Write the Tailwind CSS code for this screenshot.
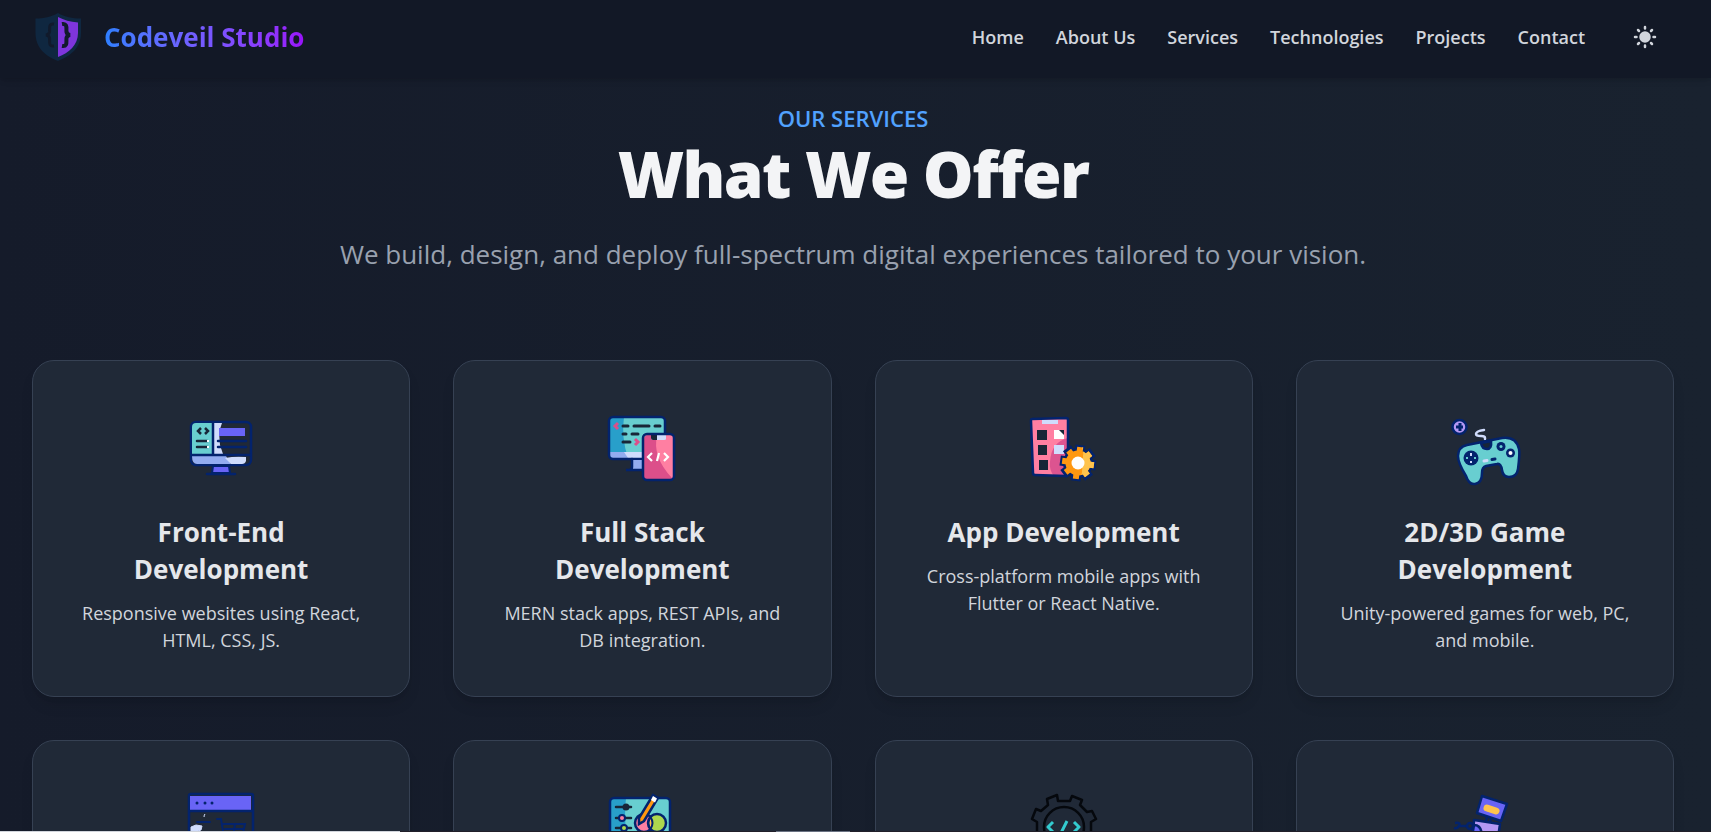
<!DOCTYPE html>
<html lang="en" class="dark">
<head>
    <meta charset="UTF-8">
    <meta name="viewport" content="width=device-width, initial-scale=1.0">
    <title>Codeveil Studio</title>
    <script src="https://cdn.jsdelivr.net/npm/@tailwindcss/browser@4"></script>
</head>
<body class="h-screen overflow-hidden bg-linear-to-r from-[#151b2a] to-[#19222f] font-['Open_Sans','Noto_Sans',sans-serif] text-gray-100">
    <header class="relative flex h-[78px] items-center justify-between bg-[#121826] pb-1 pl-8 pr-[38px] shadow-md">
        <a href="#" class="flex items-center gap-5">
            <svg class="h-[52px] w-[52px]" viewBox="0 0 52 52" aria-hidden="true">
                <path d="M26 2C19 6 12 7.500 3.500 7.500V22C3.500 37 14 45.500 26 50C38 45.500 49 37 49 22V7.500C40 7.500 33 6 26 2Z" fill="#0f2740"/>
                <path d="M26 6C32 9 38 11 46 11.500V22C46 34 37 42 26 46Z" fill="#7e35dc"/>
                <path d="M22 13C16 12 18 18 17.500 21C17 23.500 14 24 14 24C14 24 17 24.500 17.500 27C18 30 16 36 22 35" fill="none" stroke="#111a2b" stroke-width="3"/>
                <path d="M30 13C36 12 34 18 34.500 21C35 23.500 38 24 38 24C38 24 35 24.500 34.500 27C34 30 36 36 30 35" fill="none" stroke="#111a2b" stroke-width="4"/>
            </svg>
            <span class="bg-linear-to-r from-blue-500 to-purple-600 bg-clip-text text-[26px] leading-9 font-bold text-transparent">Codeveil Studio</span>
        </a>
        <div class="flex items-center gap-8">
            <nav class="flex items-center gap-8 text-lg font-semibold text-gray-300">
                <a href="#">Home</a>
                <a href="#">About Us</a>
                <a href="#">Services</a>
                <a href="#">Technologies</a>
                <a href="#">Projects</a>
                <a href="#">Contact</a>
            </nav>
            <button type="button" aria-label="Toggle theme" class="flex h-14 w-14 items-center justify-center p-4 text-gray-300">
                <svg class="h-6 w-6" viewBox="0 0 24 24" fill="currentColor" stroke="currentColor" stroke-width="2.500" stroke-linecap="round">
                    <circle cx="12" cy="12" r="4.500"/>
                    <path d="M12 2v1.500M12 20.500v1.500M2 12h1.500M20.500 12h1.500M5 5l1 1M18 18l1 1M5 19l1-1M18 6l1-1"/>
                </svg>
            </button>
        </div>
    </header>

    <main class="pl-8 pr-[37px] pt-6">
        <div class="text-center">
            <p class="text-[22px] leading-8 font-semibold text-blue-400">OUR SERVICES</p>
            <h1 class="mt-2 text-[64px] leading-[64px] font-extrabold tracking-tight text-gray-100">What We Offer</h1>
            <p class="mt-7 text-[26px] leading-10 text-gray-400">We build, design, and deploy full-spectrum digital experiences tailored to your vision.</p>
        </div>

        <div class="mt-[86px] grid grid-cols-4 gap-[43px]">
            <article class="flex h-[337px] flex-col items-center rounded-[22px] border border-gray-700 bg-[#202937] px-10 pt-10 text-center shadow-lg">
                <svg class="h-[90px] w-[90px] shrink-0" viewBox="-4 1 90 90" aria-hidden="true">
                    <rect x="11" y="22" width="60" height="43" rx="5" fill="#202937" stroke="#03236d" stroke-width="2.500"/>
                    <path d="M12 54V27q0-4 4-4h17v31z" fill="#68ced0"/>
                    <path d="M34 23h8l-3 9 1 13 3 9h-9z" fill="#d0dcfc"/>
                    <path d="M12 56h34l5 8H17q-5 0-5-8z" fill="#93acf0"/>
                    <path d="M45 58q10-2 21-1v4q-1 3-4 3H51z" fill="#d0dcfc"/>
                    <path d="M33 23v32M11 55h60" stroke="#03236d" stroke-width="2.500"/>
                    <rect x="39" y="28" width="26" height="8" fill="#6964f6"/>
                    <path d="M38 41h28M38 47h28" stroke="#03236d" stroke-width="2.500" stroke-linecap="round"/>
                    <path d="M21 28l-3 3 3 3M25 28l3 3-3 3" fill="none" stroke="#182638" stroke-width="2.500"/>
                    <path d="M17 41h10M17 47h10" stroke="#182638" stroke-width="2.500" stroke-linecap="round"/>
                    <path d="M27 41h2M27 47h2" stroke="#fff" stroke-width="2"/>
                    <path d="M33 66h16l1 7H32z" fill="#6964f6" stroke="#03236d" stroke-width="2"/>
                    <path d="M27 74h28" stroke="#03236d" stroke-width="2.500" stroke-linecap="round"/>
                </svg>
                <h2 class="mt-[23px] text-[26px] leading-[37px] font-bold text-gray-200">Front-End Development</h2>
                <p class="mt-3 text-lg leading-[27px] text-gray-300">Responsive websites using React, HTML, CSS, JS.</p>
            </article>

            <article class="flex h-[337px] flex-col items-center rounded-[22px] border border-gray-700 bg-[#202937] px-10 pt-10 text-center shadow-lg">
                <svg class="h-[90px] w-[90px] shrink-0" viewBox="-2 1 90 90" aria-hidden="true">
                    <rect x="11" y="17" width="55" height="41" rx="4" fill="#68ced0"/>
                    <path d="M15 17h10q-3 20 4 41H11V21q0-4 4-4z" fill="#289fca"/>
                    <path d="M11 52h55v3q0 3-4 3H14q-3 0-3-3z" fill="#93acf0"/>
                    <path d="M25 52h40v6H29z" fill="#d0dcfc"/>
                    <rect x="10" y="17" width="56" height="42" rx="4" fill="none" stroke="#03236d" stroke-width="2.500"/>
                    <path d="M34 60h11v10H34z" fill="#93acf0"/>
                    <path d="M33 59v8q0 3-3 3h-3 18" fill="none" stroke="#03236d" stroke-width="2.500" stroke-linecap="round"/>
                    <path d="M24 26h5M35 26h15M56 26h5M24 34h3M33 34h6M24 42h7" stroke="#182638" stroke-width="3" stroke-linecap="round"/>
                    <path d="M19 23l-3 3 3 3M36 39l3 3-3 3" fill="none" stroke="#dc4f8a" stroke-width="3"/>
                    <rect x="45" y="35" width="30" height="45" rx="4" fill="#ff7fa2"/>
                    <path d="M49 35h9q-5 22 15 43l-2 2H49q-4 0-4-4V39q0-4 4-4z" fill="#dc4f8a"/>
                    <path d="M52 35h15v4q0 1-2 1H54q-2 0-2-2z" fill="#d0dcfc"/>
                    <path d="M52 35h6v5h-4q-2 0-2-2z" fill="#182638"/>
                    <rect x="44" y="34" width="31" height="46" rx="4" fill="none" stroke="#03236d" stroke-width="2.500"/>
                    <path d="M53 53l-4 4 4 4M65 53l4 4-4 4M60 53l-2 8" fill="none" stroke="#fff" stroke-width="2.200"/>
                </svg>
                <h2 class="mt-[23px] text-[26px] leading-[37px] font-bold text-gray-200">Full Stack Development</h2>
                <p class="mt-3 text-lg leading-[27px] text-gray-300">MERN stack apps, REST APIs, and DB integration.</p>
            </article>

            <article class="flex h-[337px] flex-col items-center rounded-[22px] border border-gray-700 bg-[#202937] px-10 pt-10 text-center shadow-lg">
                <svg class="h-[90px] w-[90px] shrink-0" viewBox="4 1 90 90" aria-hidden="true">
                    <path d="M17 19l34-1q2 0 2 2v54q0 2-2 2l-31-1q-2 0-2-2l-2-52q0-2 1-2z" fill="#ff7fa2"/>
                    <path d="M53 38q-17 4-18 24-1 8 4 14h14z" fill="#dc5490"/>
                    <path d="M17 19l34-1q2 0 2 2v54q0 2-2 2l-31-1q-2 0-2-2l-2-52q0-2 1-2z" fill="none" stroke="#03236d" stroke-width="2.500"/>
                    <path d="M27 20h16v4H27z" fill="#d0dcfc"/>
                    <path d="M22 30h10v10H22zM23 45h9v10h-9zM24 60h9v10h-9z" fill="#182638"/>
                    <path d="M39 30h10v9H39z" fill="#fff"/>
                    <path d="M44 30h5v5z" fill="#182638"/>
                    <path d="M39 45h10v9H39z" fill="#d0dcfc"/>
                    <defs>
                        <clipPath id="gear-light"><path d="M66 42h20v40H64q8-20 2-40z"/></clipPath>
                    </defs>
                    <g fill="#03236d" stroke="#03236d" stroke-width="10">
                        <circle cx="63" cy="63" r="10"/>
                        <path d="M63 45v36M45 63h36M50 50l26 26M50 76l26-26" transform="rotate(8 63 63)"/>
                    </g>
                    <g fill="#ff9811" stroke="#ff9811" stroke-width="6">
                        <circle cx="63" cy="63" r="9.500"/>
                        <path d="M63 47v32M47 63h32M52 52l22 22M52 74l22-22" transform="rotate(8 63 63)"/>
                    </g>
                    <g fill="#ffc34d" stroke="#ffc34d" stroke-width="6" clip-path="url(#gear-light)">
                        <circle cx="63" cy="63" r="9.500"/>
                        <path d="M63 47v32M47 63h32M52 52l22 22M52 74l22-22" transform="rotate(8 63 63)"/>
                    </g>
                    <circle cx="63" cy="63" r="6.500" fill="#fff"/>
                </svg>
                <h2 class="mt-[23px] text-[26px] leading-[37px] font-bold text-gray-200">App Development</h2>
                <p class="mt-3 text-lg leading-[27px] text-gray-300">Cross-platform mobile apps with Flutter or React Native.</p>
            </article>

            <article class="flex h-[337px] flex-col items-center rounded-[22px] border border-gray-700 bg-[#202937] px-10 pt-10 text-center shadow-lg">
                <svg class="h-[90px] w-[90px] shrink-0" viewBox="0 1 90 90" aria-hidden="true">
                    <circle cx="19.500" cy="27" r="7" fill="#b498f4" stroke="#03236d" stroke-width="2.500"/>
                    <path d="M20 23v8M16 27h7" stroke="#03236d" stroke-width="3"/>
                    <path d="M45 39v-1q0-2-4-2-5 0-5-2 0-3 8-4" fill="none" stroke="#d0dcfc" stroke-width="2.500" stroke-linecap="round"/>
                    <path d="M18 56q0-9 9-11l35-7q14-2 17 11 1 4-1 20-1 8-9 8-6 0-7-7-1-7-5-6l-11 2q-4 1-4 7 0 10-7 11-6 1-9-8-8-13-8-20z" fill="#68ced0" stroke="#03236d" stroke-width="2.500"/>
                    <path d="M41 43q1 6 6 6t4-8z" fill="#182638" stroke="#03236d" stroke-width="2.500"/>
                    <circle cx="31" cy="58" r="7.500" fill="#03236d"/>
                    <path d="M31 53v3M31 61v2" stroke="#d0dcfc" stroke-width="2"/>
                    <path d="M26 58h2M34 58h2" stroke="#68ced0" stroke-width="2"/>
                    <circle cx="61" cy="46.500" r="4.500" fill="#03236d"/>
                    <circle cx="61" cy="46.500" r="1.500" fill="#68ced0"/>
                    <circle cx="70.500" cy="53" r="4.500" fill="#03236d"/>
                    <circle cx="70.500" cy="53" r="2" fill="#fff"/>
                    <path d="M44 61l3-0.500" stroke="#d0dcfc" stroke-width="3" stroke-linecap="round"/>
                    <path d="M52 59.500l3-0.500" stroke="#03236d" stroke-width="3" stroke-linecap="round"/>
                </svg>
                <h2 class="mt-[23px] text-[26px] leading-[37px] font-bold text-gray-200">2D/3D Game Development</h2>
                <p class="mt-3 text-lg leading-[27px] text-gray-300">Unity-powered games for web, PC, and mobile.</p>
            </article>

            <article class="flex h-[337px] flex-col items-center rounded-[22px] border border-gray-700 bg-[#202937] px-10 pt-10 text-center shadow-lg">
                <svg class="h-[90px] w-[90px] shrink-0" viewBox="1 2 90 90" aria-hidden="true">
                    <rect x="14" y="15" width="64" height="60" rx="2" fill="#202937" stroke="#03236d" stroke-width="2.500"/>
                    <path d="M15 17h61v14H15z" fill="#6964f6"/>
                    <path d="M14 32h63" stroke="#03236d" stroke-width="2.500"/>
                    <path d="M22 24h0M30 24h0M37 24h0" stroke="#03236d" stroke-width="3" stroke-linecap="round"/>
                    <path d="M22 43h13M42 40h4l3 18h18l3-13H47M50 50h18M60 45l-2 12" fill="none" stroke="#03236d" stroke-width="2" stroke-linecap="round"/>
                    <path d="M29 38q0-2 1-3M16 75V48l5-2 6 1-1 4-3 1v23z" fill="#d0dcfc" stroke="#d0dcfc" stroke-width="1"/>
                </svg>
            </article>

            <article class="flex h-[337px] flex-col items-center rounded-[22px] border border-gray-700 bg-[#202937] px-10 pt-10 text-center shadow-lg">
                <svg class="h-[90px] w-[90px] shrink-0" viewBox="0 2 90 90" aria-hidden="true">
                    <rect x="13" y="19" width="60" height="55" rx="4" fill="#68ced0"/>
                    <path d="M17 19h12q-3 26 4 55H17q-4 0-4-4V23q0-4 4-4z" fill="#289fca"/>
                    <rect x="13" y="19" width="60" height="55" rx="4" fill="none" stroke="#03236d" stroke-width="2.500"/>
                    <path d="M19 28h15M19 39h15M19 49h15" stroke="#182638" stroke-width="2.500" stroke-linecap="round"/>
                    <circle cx="29" cy="28" r="3.500" fill="#182638"/>
                    <circle cx="25" cy="39" r="3" fill="#ff7fa2" stroke="#03236d" stroke-width="2"/>
                    <circle cx="27" cy="49" r="3" fill="#add84e" stroke="#03236d" stroke-width="2"/>
                    <circle cx="47" cy="44" r="9" fill="#ff7fa2" stroke="#03236d" stroke-width="2.500"/>
                    <circle cx="60" cy="44" r="9" fill="#add84e" stroke="#03236d" stroke-width="2.500"/>
                    <path d="M53.500 38q-4 6 0 12 4-6 0-12z" fill="#ffc34d" stroke="#03236d" stroke-width="2"/>
                    <path d="M56 16l5 3-14 23-5 3v-6z" fill="#ff9811" stroke="#03236d" stroke-width="2.500"/>
                    <path d="M56 17l4 2.500-2 4-4-2.500z" fill="#fff"/>
                </svg>
            </article>

            <article class="flex h-[337px] flex-col items-center rounded-[22px] border border-gray-700 bg-[#202937] px-10 pt-10 text-center shadow-lg">
                <svg class="h-[90px] w-[90px] shrink-0" viewBox="1 1 90 90" fill="none" stroke="#05080d" stroke-width="2.500" stroke-linejoin="round" aria-hidden="true">
                    <path d="M40 21L39 15 29 19 30 25 23 31 18 29 14 39 19 42V52L14 55 18 64 24 62 31 69 30 75 39 78 41 73H51L53 78 63 75 62 69 69 62 74 64 78 55 73 52V42L78 39 74 31 69 32 62 25 64 20 54 16 52 21Z"/>
                    <circle cx="46" cy="47" r="20"/>
                    <path d="M35 42l-5 5 5 5M56 42l5 5-5 5M49 41l-6 12" stroke="#33cbd0" stroke-width="3"/>
                </svg>
            </article>

            <article class="flex h-[337px] flex-col items-center rounded-[22px] border border-gray-700 bg-[#202937] px-10 pt-10 text-center shadow-lg">
                <svg class="h-[90px] w-[90px] shrink-0" viewBox="0 1 90 90" stroke="#03236d" stroke-width="2.500" stroke-linejoin="round" aria-hidden="true">
                    <path d="M42 16l25 8-6 17-24-8z" fill="#6964f6"/>
                    <path d="M47 28l9 3" stroke="#ffc34d" stroke-width="7" stroke-linecap="round"/>
                    <path d="M47 37l-1 4M51 38l-1 4M15 43q6-1 4 3-2 3-5 2M19 46h9" fill="none"/>
                    <circle cx="30" cy="46" r="3" fill="#202937"/>
                    <path d="M34 40l26 4-4 28H32z" fill="#b498f4"/>
                    <path d="M34 45q8 0 8 12H32z" fill="#6964f6"/>
                </svg>
            </article>
        </div>
    </main>

    <!-- page load progress -->
    <div class="fixed inset-x-0 bottom-0 flex h-px justify-between bg-[#211f29]">
        <div class="w-[400px] bg-gray-300"></div>
        <div class="mr-[861px] w-[74px] bg-gray-500"></div>
    </div>
</body>
</html>
